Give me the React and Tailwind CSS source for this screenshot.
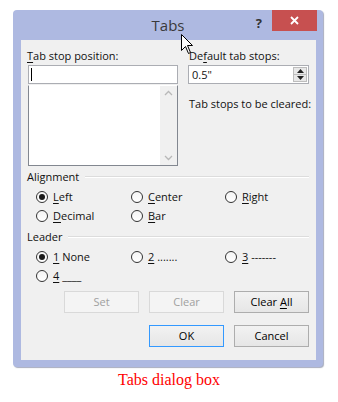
import React from "react";

const U = ({ children }) => <span className="underline underline-offset-[2px] decoration-[1px]">{children}</span>;

function Radio({ checked, children }) {
  return (
    <div className="flex items-center h-[19px]">
      <span className="w-[12px] h-[12px] rounded-full border border-[#333] bg-gradient-to-b from-[#f4f4f4] to-white flex items-center justify-center shrink-0">
        {checked && <span className="w-[6px] h-[6px] rounded-full bg-[#1a1a1a]" />}
      </span>
      <span className="ml-[5px] whitespace-pre">{children}</span>
    </div>
  );
}

function Btn({ children, disabled, def }) {
  const cls = disabled
    ? "border-[#d9d9d9] bg-[#f4f4f4] text-[#a0a0a0]"
    : def
    ? "border-[#3399ff] bg-gradient-to-b from-[#f2f2f2] to-[#e6e6e6] text-black"
    : "border-[#adadad] bg-gradient-to-b from-[#f2f2f2] to-[#e6e6e6] text-black";
  return (
    <div className={"w-[75px] h-[22px] border flex items-center justify-center " + cls}>
      <span className="whitespace-pre">{children}</span>
    </div>
  );
}

function Section({ title, lineGap }) {
  return (
    <div className="flex items-center h-[16px]">
      <span>{title}</span>
      <span className={"flex-1 h-[2px] border-t border-[#dcdcdc] border-b-white border-b " + lineGap} />
    </div>
  );
}

export default function App() {
  return (
    <div
      className="w-[338px] h-[402px] bg-white relative overflow-hidden"
      style={{ fontFamily: "'Open Sans', 'Noto Sans', sans-serif" }}
    >
      <div className="pt-[10px] pl-[13px]">
        <div className="w-[310px] h-[357px] bg-[#aeb9e1] rounded-[4px] shadow-[1px_1px_1px_rgba(60,70,110,0.45)] flex flex-col">
          {/* title bar */}
          <div className="h-[30px] grid grid-cols-[1fr_auto_1fr]">
            <div />
            <div className="text-[15px] text-[#3a3a3a] pt-[5px] leading-[20px]">Tabs</div>
            <div className="flex justify-end items-start">
              <span className="text-[13px] font-bold text-[#333] mt-[5px] mr-[10px] leading-[16px]">?</span>
              <div className="w-[45px] h-[21px] bg-[#c75050] mr-[6px] flex items-center justify-center">
                <svg width="9" height="9" viewBox="0 0 9 9">
                  <path d="M1 1 L8 8 M8 1 L1 8" stroke="white" strokeWidth="1.8" />
                </svg>
              </div>
            </div>
          </div>
          {/* client area */}
          <div className="ml-[8px] w-[295px] h-[320px] bg-[#f0f0f0] text-[11px] text-[#111] leading-[16px] pl-[6px] pr-[7px] pt-[8px]">
            <div className="flex">
              <div className="w-[151px] shrink-0">
                <div className="h-[16px]"><U>T</U>ab stop position:</div>
                <div className="mt-[1px] ml-[1px] h-[19px] border border-[#abadb3] bg-white flex items-center pl-[2px]">
                  <span className="w-[1px] h-[13px] bg-black" />
                </div>
                <div className="ml-[1px] mt-[1px] h-[81px] border border-[#828790] border-t-white bg-white flex">
                  <div className="flex-1" />
                  <div className="w-[17px] bg-[#f0f0f0] flex flex-col items-center justify-between py-[4px]">
                    <svg width="9" height="6" viewBox="0 0 9 6"><path d="M1 5 L4.5 1.5 L8 5" stroke="#b8b8b8" strokeWidth="1.3" fill="none" /></svg>
                    <svg width="9" height="6" viewBox="0 0 9 6"><path d="M1 1 L4.5 4.5 L8 1" stroke="#b8b8b8" strokeWidth="1.3" fill="none" /></svg>
                  </div>
                </div>
              </div>
              <div className="ml-[10px] flex-1 min-w-0">
                <div className="h-[16px] pl-[1px]">De<U>f</U>ault tab stops:</div>
                <div className="mt-[1px] h-[19px] border border-[#abadb3] bg-white flex items-center pl-[3px]">
                  <span className="flex-1">0.5"</span>
                  <div className="w-[14px] h-[15px] mr-[1px] border border-[#bdbdbd] bg-[#e8e8e8] flex flex-col">
                    <div className="flex-1 flex items-center justify-center border-b border-[#bdbdbd]">
                      <svg width="7" height="4" viewBox="0 0 7 4"><path d="M0 4 L3.5 0 L7 4 Z" fill="#222" /></svg>
                    </div>
                    <div className="flex-1 flex items-center justify-center">
                      <svg width="7" height="4" viewBox="0 0 7 4"><path d="M0 0 L3.5 4 L7 0 Z" fill="#222" /></svg>
                    </div>
                  </div>
                </div>
                <div className="mt-[12px] pl-[1px] whitespace-nowrap">Tab stops to be cleared:</div>
              </div>
            </div>

            <div className="mt-[3px]">
              <Section title="Alignment" lineGap="ml-[6px]" />
            </div>
            <div className="grid grid-cols-[95px_94px_auto] pl-[9px] mt-[2px]">
              <Radio checked><U>L</U>eft</Radio>
              <Radio><U>C</U>enter</Radio>
              <Radio><U>R</U>ight</Radio>
              <Radio><U>D</U>ecimal</Radio>
              <Radio><U>B</U>ar</Radio>
            </div>
            <div className="mt-[4px]">
              <Section title="Leader" lineGap="ml-[6px]" />
            </div>
            <div className="grid grid-cols-[95px_94px_auto] pl-[9px] mt-[2px]">
              <Radio checked><U>1</U> None</Radio>
              <Radio><U>2</U> .......</Radio>
              <Radio><U>3</U> -------</Radio>
              <Radio><U>4</U> ____</Radio>
            </div>
            <div className="flex justify-end gap-[10px] mt-[6px]">
              <Btn disabled>Set</Btn>
              <Btn disabled>Clear</Btn>
              <Btn>Clear <U>A</U>ll</Btn>
            </div>
            <div className="flex justify-end gap-[10px] mt-[12px]">
              <Btn def>OK</Btn>
              <Btn>Cancel</Btn>
            </div>
          </div>
        </div>
      </div>
      <div
        className="text-center text-[16px] text-[#ff0000] mt-[3px] leading-[20px]"
        style={{ fontFamily: "'Liberation Serif', serif" }}
      >
        Tabs dialog box
      </div>
      <svg className="absolute left-[181px] top-[34px]" width="13" height="21" viewBox="0 0 13 21">
        <path d="M0.5 0.5 L0.5 16.5 L4.5 12.5 L7.5 19.5 L9.5 18.5 L6.5 11.5 L11.5 11.5 Z" fill="white" stroke="black" strokeWidth="1" strokeLinejoin="round" />
      </svg>
    </div>
  );
}
